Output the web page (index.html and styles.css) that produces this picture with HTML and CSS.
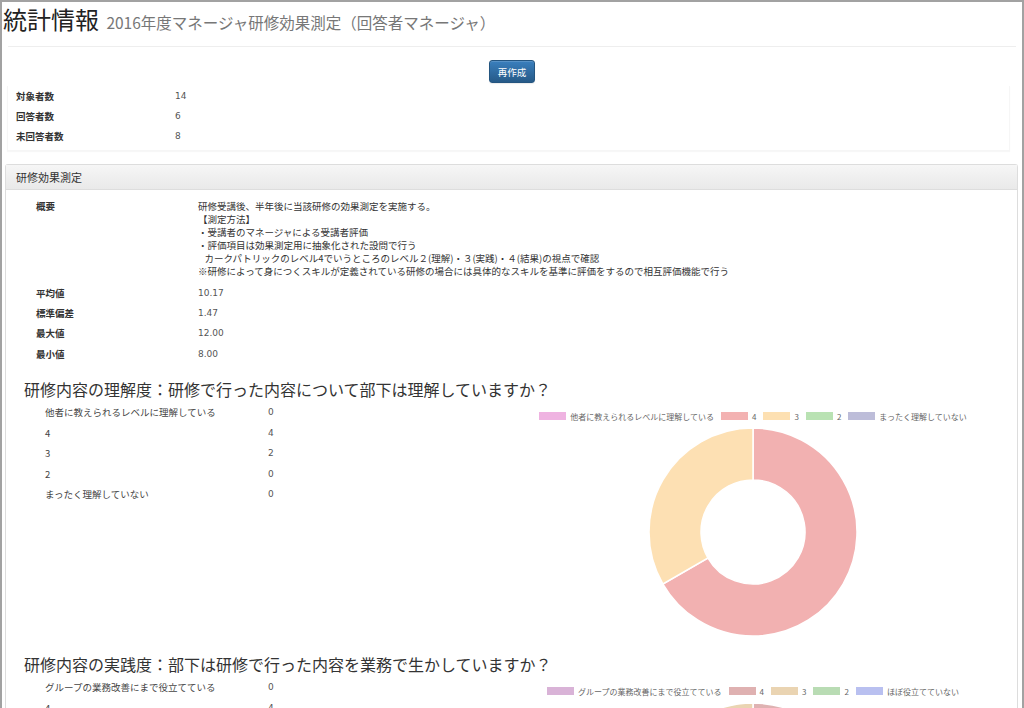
FILE: index.html
```html
<!DOCTYPE html>
<html lang="ja">
<head>
<meta charset="utf-8">
<title>統計情報</title>
<link rel="stylesheet" href="styles.css">
</head>
<body>
<div class="frame">
  <header class="page-header">
    <h1 class="title">統計情報 <small class="subtitle">2016年度マネージャ研修効果測定（回答者マネージャ）</small></h1>
  </header>
  <hr class="rule">
  <div class="actions"><button class="btn-primary" type="button">再作成</button></div>
  <div class="count-box">
    <div class="row"><span class="lbl">対象者数</span><span class="val">14</span></div>
    <div class="row"><span class="lbl">回答者数</span><span class="val">6</span></div>
    <div class="row"><span class="lbl">未回答者数</span><span class="val">8</span></div>
  </div>

  <section class="panel">
    <div class="panel-heading">研修効果測定</div>
    <div class="panel-body">
      <div class="info">
        <div class="info-row summary">
          <span class="lbl">概要</span>
          <div class="desc">
            <div>研修受講後、半年後に当該研修の効果測定を実施する。</div>
            <div>【測定方法】</div>
            <div>・受講者のマネージャによる受講者評価</div>
            <div>・評価項目は効果測定用に抽象化された設問で行う</div>
            <div>&nbsp;&nbsp;&nbsp;カークパトリックのレベル4でいうところのレベル２(理解)・３(実践)・４(結果)の視点で確認</div>
            <div>※研修によって身につくスキルが定義されている研修の場合には具体的なスキルを基準に評価をするので相互評価機能で行う</div>
          </div>
        </div>
        <div class="info-row"><span class="lbl">平均値</span><span class="val">10.17</span></div>
        <div class="info-row"><span class="lbl">標準偏差</span><span class="val">1.47</span></div>
        <div class="info-row"><span class="lbl">最大値</span><span class="val">12.00</span></div>
        <div class="info-row"><span class="lbl">最小値</span><span class="val">8.00</span></div>
      </div>

      <div class="question">
        <h2 class="q-title">研修内容の理解度：研修で行った内容について部下は理解していますか？</h2>
        <div class="q-body">
          <div class="answers">
            <div class="ans"><span class="a-lbl">他者に教えられるレベルに理解している</span><span class="a-val">0</span></div>
            <div class="ans"><span class="a-lbl">4</span><span class="a-val">4</span></div>
            <div class="ans"><span class="a-lbl">3</span><span class="a-val">2</span></div>
            <div class="ans"><span class="a-lbl">2</span><span class="a-val">0</span></div>
            <div class="ans"><span class="a-lbl">まったく理解していない</span><span class="a-val">0</span></div>
          </div>
          <div class="chart">
            <div class="legend">
              <span class="item"><i class="sw c1a"></i>他者に教えられるレベルに理解している</span>
              <span class="item"><i class="sw c1b"></i>4</span>
              <span class="item"><i class="sw c1c"></i>3</span>
              <span class="item"><i class="sw c1d"></i>2</span>
              <span class="item"><i class="sw c1e"></i>まったく理解していない</span>
            </div>
            <svg class="donut" width="210" height="210" viewBox="0 0 210 210">
              <path d="M105 1 A104 104 0 1 1 14.93 157 L59.97 131 A52 52 0 1 0 105 53 Z" fill="#f2b1b1" stroke="#fff" stroke-width="1.5"/>
              <path d="M14.93 157 A104 104 0 0 1 105 1 L105 53 A52 52 0 0 0 59.97 131 Z" fill="#fde0b3" stroke="#fff" stroke-width="1.5"/>
            </svg>
          </div>
        </div>
      </div>

      <div class="question">
        <h2 class="q-title">研修内容の実践度：部下は研修で行った内容を業務で生かしていますか？</h2>
        <div class="q-body">
          <div class="answers">
            <div class="ans"><span class="a-lbl">グループの業務改善にまで役立てている</span><span class="a-val">0</span></div>
            <div class="ans"><span class="a-lbl">4</span><span class="a-val">4</span></div>
            <div class="ans"><span class="a-lbl">3</span><span class="a-val">2</span></div>
            <div class="ans"><span class="a-lbl">2</span><span class="a-val">0</span></div>
            <div class="ans"><span class="a-lbl">ほぼ役立てていない</span><span class="a-val">0</span></div>
          </div>
          <div class="chart">
            <div class="legend">
              <span class="item"><i class="sw c2a"></i>グループの業務改善にまで役立てている</span>
              <span class="item"><i class="sw c2b"></i>4</span>
              <span class="item"><i class="sw c2c"></i>3</span>
              <span class="item"><i class="sw c2d"></i>2</span>
              <span class="item"><i class="sw c2e"></i>ほぼ役立てていない</span>
            </div>
            <svg class="donut" width="210" height="210" viewBox="0 0 210 210">
              <path d="M105 1 A104 104 0 1 1 14.93 157 L59.97 131 A52 52 0 1 0 105 53 Z" fill="#dfb2b2" stroke="#fff" stroke-width="1.5"/>
              <path d="M14.93 157 A104 104 0 0 1 105 1 L105 53 A52 52 0 0 0 59.97 131 Z" fill="#ead4b2" stroke="#fff" stroke-width="1.5"/>
            </svg>
          </div>
        </div>
      </div>
    </div>
  </section>
</div>
</body>
</html>
```

FILE: styles.css
```css
* { box-sizing: border-box; }
html, body { margin: 0; padding: 0; background: #fff; }
body {
  font-family: "Noto Sans CJK JP", "Noto Sans", sans-serif;
  color: #333;
  font-size: 9.5px;
}
.frame {
  width: 1024px;
  height: 708px;
  overflow: hidden;
  border: 2px solid #a2a2a2;
  border-bottom: none;
}
.page-header { height: 36px; padding-left: 1px; }
.title {
  margin: 0;
  font-size: 24px;
  font-weight: normal;
  line-height: 34px;
  color: #222;
}
.subtitle {
  font-size: 15.5px;
  color: #777;
  margin-left: 2px;
}
.rule {
  margin: 8px 6px 0 6px;
  border: 0;
  border-top: 1px solid #eee;
  height: 0;
}
.actions {
  display: flex;
  justify-content: center;
  margin-top: 13px;
}
.btn-primary {
  width: 46px;
  height: 23px;
  padding: 0;
  font-family: inherit;
  font-size: 9.5px;
  color: #fff;
  background: linear-gradient(#3a7fbd, #265a88);
  border: 1px solid #245580;
  border-radius: 3px;
  box-shadow: inset 0 1px 0 rgba(255,255,255,.15), 0 1px 1px rgba(0,0,0,.08);
}
.count-box {
  margin: 3px 12px 0 5px;
  padding: 0 0 4px 8px;
  border: 1px solid #f6f6f6;
  border-top: none;
  box-shadow: 0 1px 1px rgba(0,0,0,.03);
}
.row {
  display: grid;
  grid-template-columns: 159px 1fr;
  height: 20px;
  align-items: center;
}
.lbl { font-weight: bold; color: #333; }
.val { color: #555; font-family: "DejaVu Sans", sans-serif; font-size: 9px; }
.panel {
  margin: 13px 4px 0 3px;
  border: 1px solid #ddd;
  border-bottom: none;
  border-radius: 3px 3px 0 0;
}
.panel-heading {
  height: 25px;
  line-height: 25px;
  padding-left: 10px;
  font-size: 11px;
  color: #333;
  background: linear-gradient(#f6f6f6, #e9e9e9);
  border-bottom: 1px solid #ddd;
}
.panel-body { padding-top: 10px; }
.info { padding-left: 30px; }
.info-row {
  display: grid;
  grid-template-columns: 162px 1fr;
  height: 20.4px;
  align-items: center;
}
.info-row.summary {
  height: auto;
  align-items: start;
  margin-bottom: 4.5px;
}
.desc { line-height: 13px; color: #333; }
.summary .lbl { line-height: 13px; }
.question { padding: 0 11px 0 18px; }
.info + .question { margin-top: 14px; }
.question + .question { margin-top: 16px; }
.q-title {
  margin: 0;
  font-size: 16px;
  font-weight: normal;
  line-height: 22px;
  color: #333;
}
.q-body {
  display: grid;
  grid-template-columns: 476px 1fr;
}
.answers { padding-left: 21px; padding-top: 2px; }
.ans {
  display: grid;
  grid-template-columns: 223px 1fr;
  height: 20.5px;
  align-items: center;
  color: #444;
}
.a-val { font-family: "DejaVu Sans", sans-serif; font-size: 9px; color: #555; }
.chart {
  display: flex;
  flex-direction: column;
  align-items: center;
}
.legend {
  display: flex;
  gap: 7px;
  margin-top: 11px;
  height: 10px;
  align-items: center;
  font-size: 8px;
  color: #666;
  white-space: nowrap;
}
.item { display: flex; align-items: center; gap: 4px; }
.sw { display: block; width: 27px; height: 8px; }
.c1a { background: #efb3e1; }
.c1b { background: #f3b2b2; }
.c1c { background: #fde0b2; }
.c1d { background: #b9e2b3; }
.c1e { background: #bdbdd9; }
.c2a { background: #d9b3d7; }
.c2b { background: #dfb1b1; }
.c2c { background: #ead4b2; }
.c2d { background: #b9dcb4; }
.c2e { background: #b9c0f0; }
.donut { display: block; margin-top: 6px; }
```
